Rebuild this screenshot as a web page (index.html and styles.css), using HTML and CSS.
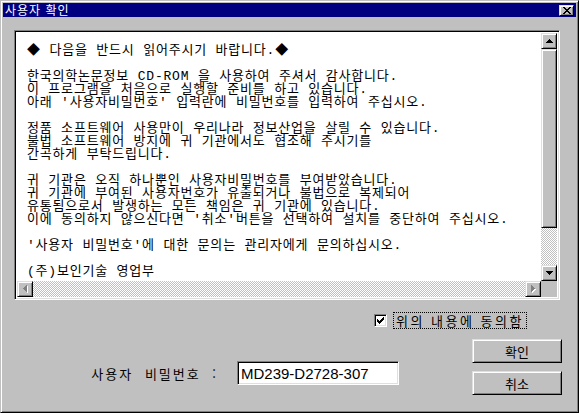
FILE: index.html
```html
<!DOCTYPE html>
<html lang="ko">
	<head>
		<meta charset="utf-8">
		<meta name="viewport" content="width=device-width, initial-scale=1.0">
		<title>사용자 확인</title>
		<link rel="stylesheet" href="styles.css">
	</head>
	<body>
		<div class="window">
			<div class="titlebar">
				<span class="title">사용자 확인</span>
				<button class="close raised">
					<svg width="8" height="7" viewBox="0 0 8 7"><path d="M0 0h2v1h-2zM6 0h2v1h-2zM1 1h2v1h-2zM5 1h2v1h-2zM2 2h4v1h-4zM3 3h2v1h-2zM2 4h4v1h-4zM1 5h2v1h-2zM5 5h2v1h-2zM0 6h2v1h-2zM6 6h2v1h-2z" fill="#000"/></svg>
				</button>
			</div>
			<div class="content">
				<div class="notice sunken">
					<div class="notice-main">
						<div class="notice-text"><span class="diamond">◆</span> 다음을 반드시 읽어주시기 바랍니다.<span class="diamond">◆</span>

한국의학논문정보 CD-ROM 을 사용하여 주셔서 감사합니다.
이 프로그램을 처음으로 실행할 준비를 하고 있습니다.
아래 '사용자비밀번호' 입력란에 비밀번호를 입력하여 주십시오.

정품 소프트웨어 사용만이 우리나라 정보산업을 살릴 수 있습니다.
불법 소프트웨어 방지에 귀 기관에서도 협조해 주시기를
간곡하게 부탁드립니다.

귀 기관은 오직 하나뿐인 사용자비밀번호를 부여받았습니다.
귀 기관에 부여된 사용자번호가 유출되거나 불법으로 복제되어
유통됨으로서 발생하는 모든 책임은 귀 기관에 있습니다.
이에 동의하지 않으신다면 '취소'버튼을 선택하여 설치를 중단하여 주십시오.

'사용자 비밀번호'에 대한 문의는 관리자에게 문의하십시오.

(주)보인기술 영업부</div>
						<div class="vscroll">
							<div class="arrow raised">
								<svg width="7" height="4" viewBox="0 0 7 4"><path d="M3 0h1v1h-1zM2 1h3v1h-3zM1 2h5v1h-5zM0 3h7v1h-7z" fill="#000"/></svg>
							</div>
							<div class="thumb raised"></div>
							<div class="track"></div>
							<div class="arrow raised">
								<svg width="7" height="4" viewBox="0 0 7 4"><path d="M0 0h7v1h-7zM1 1h5v1h-5zM2 2h3v1h-3zM3 3h1v1h-1z" fill="#000"/></svg>
							</div>
						</div>
					</div>
					<div class="hscroll">
						<div class="arrow raised">
							<svg width="5" height="8" viewBox="0 0 5 8"><path d="M4 1h1v7h-1zM3 3h1v1h-1z" fill="#fff"/><path d="M0 3h1v1h-1zM1 2h1v3h-1zM2 1h1v5h-1zM3 0h1v7h-1z" fill="#808080"/></svg>
						</div>
						<div class="track"></div>
						<div class="arrow raised">
							<svg width="5" height="8" viewBox="0 0 5 8"><path d="M1 1h1v7h-1zM2 2h1v5h-1zM3 3h1v3h-1zM4 4h1v1h-1z" fill="#fff"/><path d="M0 0h1v7h-1zM1 1h1v5h-1zM2 2h1v3h-1zM3 3h1v1h-1z" fill="#808080"/></svg>
						</div>
						<div class="corner"></div>
					</div>
				</div>
				<div class="agree-row">
					<span class="checkbox sunken">
						<svg width="7" height="7" viewBox="0 0 7 7"><path d="M6 0h1v1h-1zM5 1h2v1h-2zM0 2h1v1h-1zM4 2h3v1h-3zM0 3h2v1h-2zM3 3h3v1h-3zM0 4h5v1h-5zM1 5h3v1h-3zM2 6h1v1h-1z" fill="#000"/></svg>
					</span>
					<span class="agree-label">위의 내용에 동의함</span>
				</div>
				<div class="bottom">
					<div class="password">
						<span class="password-label">사용자 비밀번호 :</span>
						<div class="field sunken">MD239-D2728-307</div>
					</div>
					<div class="buttons">
						<button class="push raised">확인</button>
						<button class="push raised">취소</button>
					</div>
				</div>
			</div>
		</div>
	</body>
</html>
```

FILE: styles.css
```css
body {
	margin: 0;
	background-color: #c0c0c0;
	font-family: "Noto Sans CJK KR", sans-serif;
}
.window {
	box-sizing: border-box;
	width: 579px;
	height: 413px;
	padding: 2px;
	border: 1px solid;
	border-color: #c0c0c0 #000 #000 #c0c0c0;
	box-shadow: inset 1px 1px #fff, inset -1px -1px #808080;
	background-color: #c0c0c0;
	display: flex;
	flex-direction: column;
}
.raised {
	box-sizing: border-box;
	border: 1px solid;
	border-color: #dfdfdf #000 #000 #dfdfdf;
	box-shadow: inset 1px 1px #fff, inset -1px -1px #808080;
	background-color: #c0c0c0;
}
.sunken {
	box-sizing: border-box;
	border: 1px solid;
	border-color: #808080 #fff #fff #808080;
	box-shadow: inset 1px 1px #000, inset -1px -1px #dfdfdf;
	background-color: #fff;
}

/* title bar */
.titlebar {
	height: 14px;
	background-color: #000080;
	display: flex;
	align-items: flex-start;
	justify-content: space-between;
	padding: 0 2px 0 2px;
}
.title {
	color: #fff;
	font-size: 12px;
	line-height: 14px;
	letter-spacing: 1px;
}
.close {
	width: 15px;
	height: 11px;
	margin-top: 2px;
	padding: 0;
	display: flex;
	align-items: center;
	justify-content: center;
}

/* notice box */
.content {
	padding: 13px 16px 0 11px;
	display: flex;
	flex-direction: column;
}
.notice {
	height: 270px;
	padding: 2px;
	display: flex;
	flex-direction: column;
}
.notice-main {
	flex: 1;
	display: flex;
	min-height: 0;
}
.notice-text {
	flex: 1;
	overflow: hidden;
	white-space: pre;
	padding: 9px 0 0 10px;
	font-family: "Liberation Mono", "Noto Sans CJK KR", monospace;
	font-size: 13px;
	line-height: 13px;
	letter-spacing: 0.8px;
	color: #000;
}
.diamond {
	font-family: "Noto Sans CJK KR", sans-serif;
}
.vscroll {
	width: 16px;
	display: flex;
	flex-direction: column;
}
.arrow {
	width: 16px;
	height: 16px;
	flex: none;
	display: flex;
	align-items: center;
	justify-content: center;
}
.thumb {
	height: 179px;
	flex: none;
}
.track {
	flex: 1;
	background: repeating-conic-gradient(#c0c0c0 0 25%, #fff 0 50%) 0 0 / 2px 2px;
}
.hscroll {
	height: 16px;
	display: flex;
}
.corner {
	width: 16px;
	background-color: #c0c0c0;
}

/* agree checkbox */
.agree-row {
	margin-top: 12px;
	margin-right: 33px;
	height: 17px;
	display: flex;
	justify-content: flex-end;
	align-items: center;
	gap: 6px;
}
.checkbox {
	width: 13px;
	height: 13px;
	display: flex;
	align-items: center;
	justify-content: center;
}
.agree-label {
	border: 1px dotted #000;
	padding: 0 2px;
	font-size: 13px;
	line-height: 15px;
	letter-spacing: 2.5px;
}

/* password and buttons */
.bottom {
	margin-top: 10px;
	margin-right: -2px;
	display: flex;
	justify-content: flex-end;
	align-items: flex-start;
}
.password {
	margin-top: 22px;
	margin-right: 73px;
	display: flex;
	align-items: center;
	gap: 19px;
}
.password-label {
	font-size: 13px;
	letter-spacing: 2px;
	word-spacing: 6px;
}
.field {
	width: 162px;
	height: 24px;
	padding: 0 3px;
	font-family: "Liberation Sans", Arial, sans-serif;
	font-size: 15px;
	line-height: 24px;
	color: #000;
}
.buttons {
	display: flex;
	flex-direction: column;
	gap: 8px;
}
.push {
	width: 90px;
	height: 24px;
	padding: 0;
	font-family: "Noto Sans CJK KR", sans-serif;
	font-size: 13px;
	color: #000;
}
```
